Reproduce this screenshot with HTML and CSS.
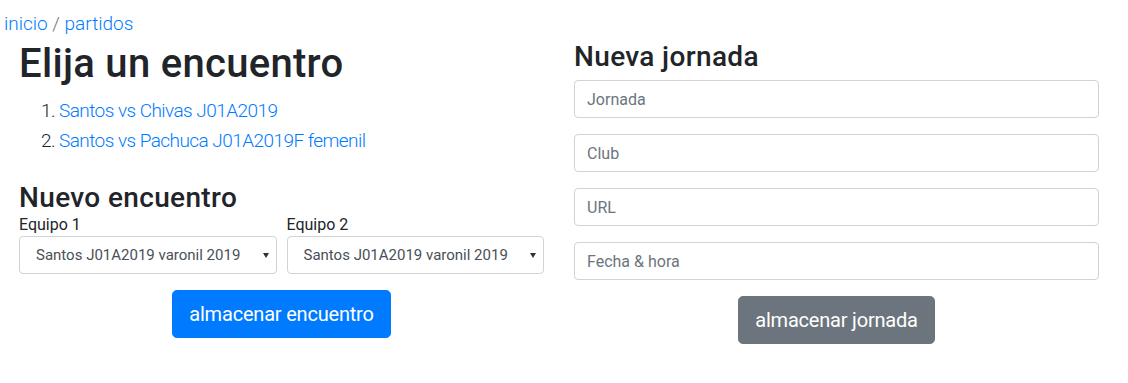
FILE: index.html
```html
<!DOCTYPE html>
<html lang="es">
<head>
<meta charset="utf-8">
<title>Partidos</title>
<link rel="stylesheet" href="styles.css">
</head>
<body>
<nav class="crumbs"><a href="#">inicio</a> <span class="sep">/</span> <a href="#">partidos</a></nav>
<div class="page">
  <section class="col">
    <h1 class="title">Elija un encuentro</h1>
    <ol class="lead-list">
      <li><a href="#">Santos vs Chivas J01A2019</a></li>
      <li><a href="#">Santos vs Pachuca J01A2019F femenil</a></li>
    </ol>
    <h3 class="subtitle sub-left">Nuevo encuentro</h3>
    <div class="form-row">
      <div class="field">
        <label class="label">Equipo 1</label>
        <div class="select-wrap">
          <select class="select"><option>Santos J01A2019 varonil 2019</option></select>
        </div>
      </div>
      <div class="field">
        <label class="label">Equipo 2</label>
        <div class="select-wrap">
          <select class="select"><option>Santos J01A2019 varonil 2019</option></select>
        </div>
      </div>
    </div>
    <div class="actions actions-left">
      <button class="btn btn-primary">almacenar encuentro</button>
    </div>
  </section>
  <section class="col">
    <h3 class="subtitle sub-right">Nueva jornada</h3>
    <input class="input" placeholder="Jornada">
    <input class="input" placeholder="Club">
    <input class="input" placeholder="URL">
    <input class="input" placeholder="Fecha &amp; hora">
    <div class="actions">
      <button class="btn btn-secondary">almacenar jornada</button>
    </div>
  </section>
</div>
</body>
</html>
```

FILE: styles.css
```css
* { box-sizing: border-box; }
body {
  margin: 0;
  font-family: Roboto, "Open Sans", sans-serif;
  color: #212529;
  background: #fff;
}
a { color: #007bff; text-decoration: none; }

.crumbs {
  height: 38px;
  padding: 10px 4px 0;
  font-size: 19px;
  line-height: 28px;
  font-weight: 300;
}
.crumbs .sep { color: #6c757d; }

.page {
  display: flex;
  width: 1110px;
  margin-left: 4px;
}
.col {
  flex: 1 1 0;
  padding: 0 15px;
}

.title {
  margin: 0 0 8px;
  padding-top: 2px;
  font-size: 40px;
  line-height: 48px;
  font-weight: 500;
  letter-spacing: 0.3px;
}
.lead-list {
  margin: 0 0 25px;
  padding-left: 40px;
  font-size: 19px;
  line-height: 30px;
  font-weight: 300;
  letter-spacing: -0.55px;
}
.subtitle {
  margin: 0;
  font-size: 28px;
  line-height: 34px;
  font-weight: 500;
  letter-spacing: 0.35px;
}
.sub-right {
  padding-top: 2px;
  margin-bottom: 6px;
}

.form-row {
  display: flex;
  gap: 10px;
}
.field { flex: 1 1 0; }
.label {
  display: block;
  font-size: 16px;
  line-height: 20px;
  margin-bottom: 1px;
}
.select-wrap { position: relative; }
.select-wrap::after {
  content: "";
  position: absolute;
  right: 8px;
  top: 17px;
  border-left: 3px solid transparent;
  border-right: 3px solid transparent;
  border-top: 5px solid #333;
  pointer-events: none;
}
.select {
  appearance: none;
  -webkit-appearance: none;
  display: block;
  width: 100%;
  height: 38px;
  padding: 0 22px 0 16px;
  font-family: inherit;
  font-size: 15px;
  color: #495057;
  background: #fff;
  border: 1px solid #ced4da;
  border-radius: 4px;
}

.input {
  display: block;
  width: 100%;
  height: 38px;
  margin-bottom: 16px;
  padding: 6px 12px;
  font-family: inherit;
  font-size: 16px;
  color: #495057;
  background: #fff;
  border: 1px solid #ced4da;
  border-radius: 4px;
}
.input::placeholder { color: #6c757d; }

.actions {
  display: flex;
  justify-content: center;
}
.actions-left { margin-top: 16px; }

.btn {
  height: 48px;
  padding: 8px 16px;
  font-family: inherit;
  font-size: 20px;
  line-height: 30px;
  letter-spacing: -0.2px;
  color: #fff;
  border: 1px solid transparent;
  border-radius: 4.8px;
}
.btn-primary { background: #007bff; border-color: #007bff; }
.btn-secondary { background: #6c757d; border-color: #6c757d; }
```
